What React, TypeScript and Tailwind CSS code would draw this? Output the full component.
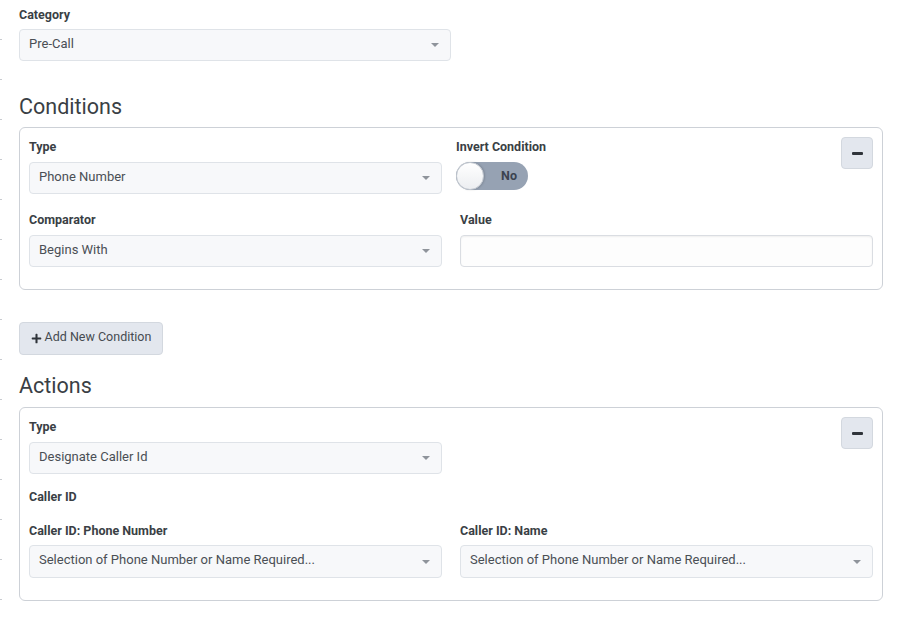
import React from "react";
import { FaPlus } from "react-icons/fa";

const font = { fontFamily: "Roboto, 'Liberation Sans', sans-serif" };

function Caret() {
  return (
    <svg width="8" height="4" viewBox="0 0 8 4" className="shrink-0">
      <path d="M0 0 L8 0 L4 4 Z" fill="#8f949b" />
    </svg>
  );
}

function Select({ value, className = "" }: { value: string; className?: string }) {
  return (
    <div
      className={`flex h-[32px] items-center justify-between rounded-[4px] border border-[#dfe3e8] bg-[#f7f8fa] pb-[3px] pl-[9px] pr-[11px] text-[13px] text-[#4a4f55] ${className}`}
    >
      <span>{value}</span>
      <span className="pt-[3px]">
        <Caret />
      </span>
    </div>
  );
}

function Label({ children, className = "" }: { children: React.ReactNode; className?: string }) {
  return (
    <div className={`h-[18px] text-[12.5px] font-bold leading-[20px] text-[#3a3f45] ${className}`}>
      {children}
    </div>
  );
}

function MinusButton() {
  return (
    <div className="flex h-[32px] w-[32px] items-center justify-center rounded-[4px] border border-[#d3d8df] bg-[#e3e7ee]">
      <div className="h-[3px] w-[11px] rounded-[1px] bg-[#2f343a]" />
    </div>
  );
}

export default function App() {
  return (
    <div className="relative flex min-h-[625px] w-[920px] bg-white" style={font}>
      <div className="w-[2px] shrink-0 bg-[repeating-linear-gradient(to_bottom,transparent_0px,transparent_39px,#c9ccd1_39px,#c9ccd1_40px)]" />
      <div className="flex flex-col pl-[17px] pt-[5px]">
        <Label>Category</Label>
        <Select value="Pre-Call" className="mt-[6px] w-[432px]" />

        <h2 className="mt-[32px] h-[26px] text-[21.5px] font-normal leading-[27px] text-[#3a3f45]">
          Conditions
        </h2>
        <div className="mt-[8px] w-[864px] rounded-[6px] border border-[#cdd1d7] px-[9px] pb-[22px] pt-[9px]">
          <div className="grid grid-cols-[413px_1fr] gap-x-[14px]">
            <div className="flex flex-col">
              <Label>Type</Label>
              <Select value="Phone Number" className="mt-[7px]" />
            </div>
            <div className="flex justify-between">
              <div className="flex flex-col">
                <Label>Invert Condition</Label>
                <div className="mt-[7px] flex h-[28px] w-[72px] items-center justify-between rounded-full bg-[#96a2b3] pr-[11px]">
                  <div className="h-[28px] w-[28px] rounded-full border border-[#c5cad1] bg-gradient-to-b from-white to-[#eceef1] shadow-[1px_0_2px_rgba(0,0,0,0.15)]" />
                  <span className="text-[12.5px] font-bold text-[#3b4350]">No</span>
                </div>
              </div>
              <MinusButton />
            </div>
            <div className="mt-[16px] flex flex-col">
              <Label>Comparator</Label>
              <Select value="Begins With" className="mt-[7px]" />
            </div>
            <div className="mt-[16px] flex flex-col pl-[4px]">
              <Label>Value</Label>
              <div className="mt-[7px] h-[32px] rounded-[4px] border border-[#dadde2] bg-[#fdfdfd] shadow-[inset_0_1px_2px_rgba(0,0,0,0.06)]" />
            </div>
          </div>
        </div>

        <button className="mt-[32px] flex h-[33px] w-[144px] items-center justify-center gap-[3px] rounded-[4px] border border-[#d3d8df] bg-[#e3e7ee] pb-[2px] text-[12.5px] text-[#464b51]">
          <FaPlus className="mt-[1px] h-[11px] w-[11px] text-[#2f343a]" />
          <span>Add New Condition</span>
        </button>

        <h2 className="mt-[17px] h-[26px] text-[21.5px] font-normal leading-[27px] text-[#3a3f45]">
          Actions
        </h2>
        <div className="mt-[9px] w-[864px] rounded-[6px] border border-[#cdd1d7] px-[9px] pb-[22px] pt-[9px]">
          <div className="grid grid-cols-[413px_1fr] gap-x-[14px]">
            <div className="flex flex-col">
              <Label>Type</Label>
              <Select value="Designate Caller Id" className="mt-[7px]" />
            </div>
            <div className="flex justify-end">
              <MinusButton />
            </div>
            <Label className="col-span-2 mt-[13px]">Caller ID</Label>
            <div className="mt-[16px] flex flex-col">
              <Label>Caller ID: Phone Number</Label>
              <Select value="Selection of Phone Number or Name Required..." className="mt-[6px] h-[33px]" />
            </div>
            <div className="mt-[16px] flex flex-col pl-[4px]">
              <Label>Caller ID: Name</Label>
              <Select value="Selection of Phone Number or Name Required..." className="mt-[6px] h-[33px]" />
            </div>
          </div>
        </div>
      </div>
    </div>
  );
}
